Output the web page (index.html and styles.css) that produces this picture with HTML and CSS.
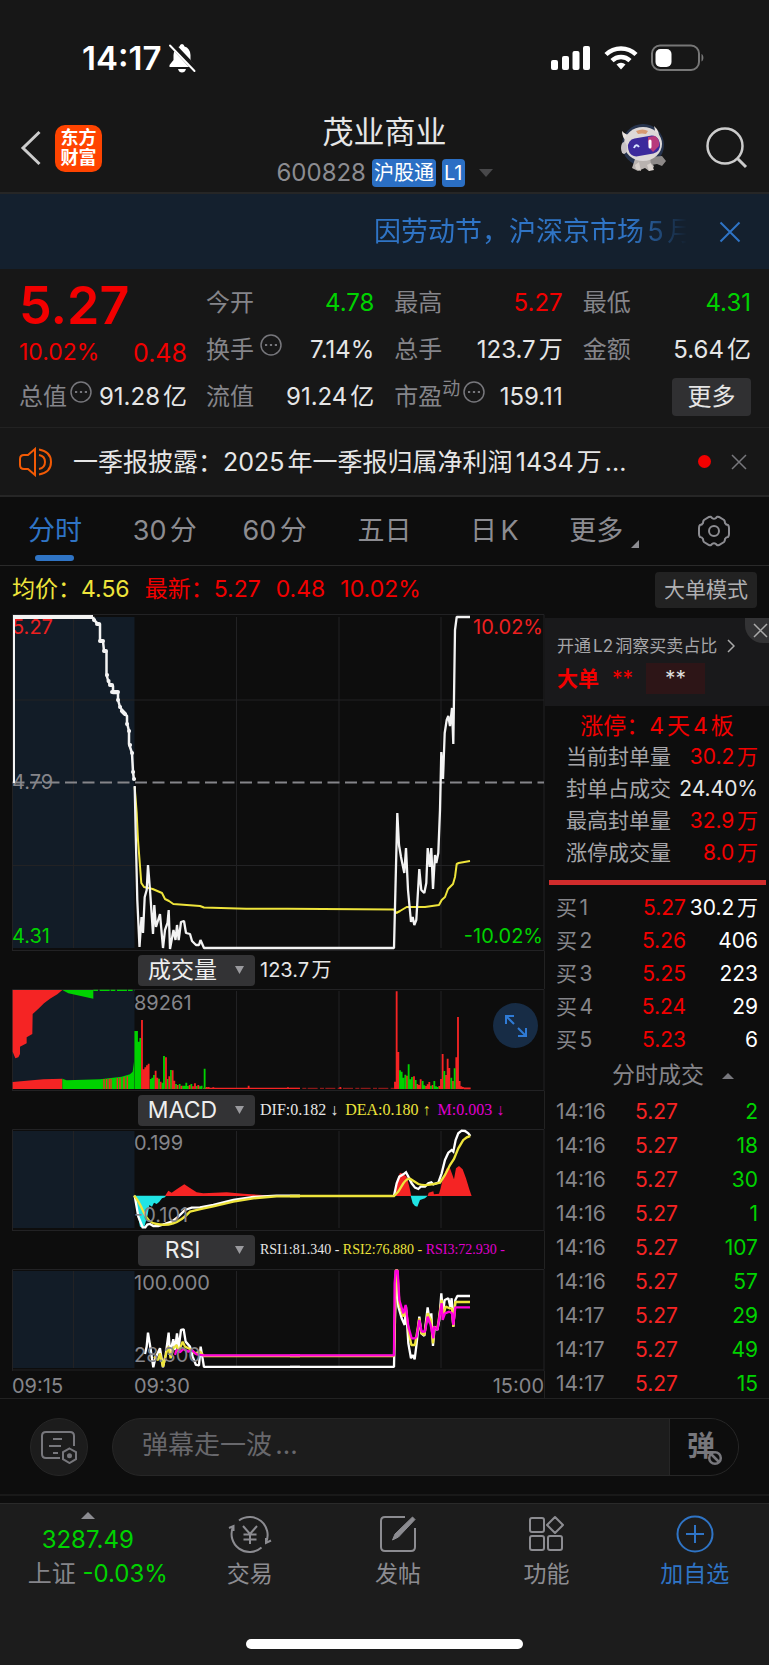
FILE: index.html
```html
<!DOCTYPE html>
<html lang="zh-CN">
<head>
<meta charset="utf-8">
<meta name="viewport" content="width=device-width, initial-scale=1">
<title>茂业商业 600828</title>
<link rel="stylesheet" href="styles.css">
</head>
<body>
<header class="top">
  <div class="status">
    <div class="status-side">
      <span class="clock">14:17</span>
      <svg width="28" height="30" viewBox="0 0 28 30"><path d="M14 1Q12 1 11.500 3.500 6 5 5.500 12v5L1.500 22v2h25v-2l-4-5v-5Q22 5 16.500 3.500 16 1 14 1zM10 26h8q-1 3.500-4 3.500T10 26z" fill="#fff"/><path d="M3.500 1 28 27" stroke="#171717" stroke-width="6"/><path d="M2 2.500 26.500 28" stroke="#fff" stroke-width="2" stroke-linecap="round"/></svg>
    </div>
    <div class="status-side">
      <svg width="40" height="26" viewBox="0 0 40 26" fill="#fff"><rect x="0" y="15" width="7" height="10" rx="2"/><rect x="11" y="11" width="7" height="14" rx="2"/><rect x="21.500" y="6" width="7" height="19" rx="2"/><rect x="32" y="1" width="7" height="24" rx="2"/></svg>
      <svg width="34" height="26" viewBox="0 0 34 26" fill="none" stroke="#fff" stroke-width="4.500"><path d="M2 9.500a21.500 21.500 0 0 1 30 0"/><path d="M8 15.700a13 13 0 0 1 18 0"/><path d="m17 24.500-4.500-5a6.500 6.500 0 0 1 9 0z" fill="#fff" stroke="none"/></svg>
      <svg width="54" height="28" viewBox="0 0 54 28"><rect x="1" y="1.500" width="47" height="24.500" rx="8" fill="none" stroke="#777" stroke-width="2"/><rect x="4.500" y="5" width="16" height="18" rx="5" fill="#fff"/><path d="M50.500 10c2.500 1 2.500 6.500 0 7.500z" fill="#777"/></svg>
    </div>
  </div>
  <div class="bar">
    <div class="bar-side">
      <button class="plain" aria-label="返回"><svg width="22" height="36" viewBox="0 0 22 36"><path d="M19.500 2 3 18l16.500 16" fill="none" stroke="#ccc" stroke-width="3"/></svg></button>
      <div class="logo">东方<br>财富</div>
    </div>
    <div class="stock">
      <h1>茂业商业</h1>
      <div class="code"><span>600828</span><span class="tag">沪股通</span><span class="tag">L1</span><svg class="code-arrow" width="14" height="12" viewBox="0 0 14 12"><path d="M0 2h14L7 10z" fill="#48484a"/></svg></div>
    </div>
    <div class="bar-side bar-end">
      <svg width="50" height="50" viewBox="0 0 50 50">
        <circle cx="24" cy="22" r="21" fill="#26334d"/>
        <path d="M16 36q8-5 16 0l3 8-5 4-4-3-7 3-6-3z" fill="#b9b3b0"/>
        <path d="M31 34l12-1 4 5-4 5-5-2-6 1z" fill="#8d8988"/><path d="M16 42l4-3 2 9-5-2zM28 42l4-2 3 7-5 1z" fill="#d8d1cc"/>
        <path d="M3 8q0 7 5 11l6-6Q6 12 3 8zM35 3q2 6-1 10l6 3q1-8-5-13z" fill="#e9e3df"/>
        <ellipse cx="24" cy="21" rx="19" ry="17" fill="#ddd8d7"/><path d="M17 8q7-3 12 0l-2 3q-4-1-8 0z" fill="#d89a72"/>
        <rect x="9" y="14" width="32" height="18" rx="8" fill="#3c2a9c" transform="rotate(-10 25 23)"/><path d="M29 14l7-1q5 3 4 10l-6 6q-6-5-5-15z" fill="#b83a7c"/>
        <path d="M15 25q2-5 5-1" fill="none" stroke="#d9e6ff" stroke-width="2"/><path d="M31 18v6" stroke="#fff" stroke-width="3" stroke-linecap="round"/>
        <ellipse cx="5" cy="25" rx="3" ry="6" fill="#c7c2c5"/>
      </svg>
      <button class="plain" aria-label="搜索"><svg width="44" height="44" viewBox="0 0 44 44" fill="none" stroke="#ccc" stroke-width="2.500"><circle cx="20" cy="20" r="17.500"/><path d="m32.500 32.500 8.500 8.500" stroke-width="3"/></svg></button>
    </div>
  </div>
</header>

<section class="banner">
  <p>因劳动节，沪深京市场5月</p>
  <button class="plain" aria-label="关闭公告"><svg width="22" height="22" viewBox="0 0 22 22"><path d="m1.500 1.500 19 19m0-19-19 19" stroke="#2f74c5" stroke-width="2"/></svg></button>
</section>

<section class="quote">
  <div class="q-main">
    <strong>5.27</strong>
    <div class="q-change"><span>10.02%</span><b>0.48</b></div>
    <div class="q-item"><span>总值</span><svg class="dots" width="22" height="22" viewBox="0 0 22 22"><circle cx="11" cy="11" r="10" fill="none" stroke="#77777c" stroke-width="1.500"/><path d="M5 11h2.200m2.700 0h2.200m2.700 0h2.200" stroke="#77777c" stroke-width="2.200"/></svg><b>91.28亿</b></div>
  </div>
  <div class="q-grid">
    <div class="q-item"><span>今开</span><b class="green">4.78</b></div>
    <div class="q-item"><span>最高</span><b class="red">5.27</b></div>
    <div class="q-item"><span>最低</span><b class="green">4.31</b></div>
    <div class="q-item"><span>换手</span><svg class="dots dots-gap" width="22" height="22" viewBox="0 0 22 22"><circle cx="11" cy="11" r="10" fill="none" stroke="#77777c" stroke-width="1.500"/><path d="M5 11h2.200m2.700 0h2.200m2.700 0h2.200" stroke="#77777c" stroke-width="2.200"/></svg><b>7.14%</b></div>
    <div class="q-item"><span>总手</span><b>123.7万</b></div>
    <div class="q-item"><span>金额</span><b>5.64亿</b></div>
    <div class="q-item"><span>流值</span><b>91.24亿</b></div>
    <div class="q-item"><span>市盈</span><small>动</small><svg class="dots" width="22" height="22" viewBox="0 0 22 22"><circle cx="11" cy="11" r="10" fill="none" stroke="#77777c" stroke-width="1.500"/><path d="M5 11h2.200m2.700 0h2.200m2.700 0h2.200" stroke="#77777c" stroke-width="2.200"/></svg><b>159.11</b></div>
    <div class="q-item q-end"><button class="more">更多</button></div>
  </div>
</section>

<section class="news">
  <svg width="34" height="30" viewBox="0 0 34 30" fill="none" stroke="#f25a05" stroke-width="2"><path d="M16 2v26l-7-6H5q-4 0-4-4v-6q0-4 4-4h4zM20 8q6 1 6 7t-6 7M20 2.500q12 2 12 12.500t-12 12.500"/></svg>
  <p>一季报披露：2025年一季报归属净利润1434万...</p>
  <i class="dot"></i>
  <button class="plain" aria-label="关闭消息"><svg width="16" height="16" viewBox="0 0 16 16"><path d="m1 1 14 14m0-14L1 15" stroke="#77777c" stroke-width="1.500"/></svg></button>
</section>

<nav class="tabs">
  <button class="active">分时</button><button>30分</button><button>60分</button><button>五日</button><button>日K</button>
  <button>更多<svg class="corner" width="8" height="13" viewBox="0 0 8 13"><path d="M8 5v8H0z" fill="#8c8c91"/></svg></button>
  <button aria-label="设置"><svg width="34" height="32" viewBox="0 0 34 32" fill="none" stroke="#8c8c91" stroke-width="2"><path d="M12 2q2-1 3 1 2 1.500 4 0 1-2 3-1l5 3q1 1 1 3 1 2 3 2 1 1 1 3v6q0 2-1 3-2 0-3 2 0 2-1 3l-5 3q-2 1-3-1-2-1.500-4 0-1 2-3 1l-5-3q-1-1-1-3-1-2-3-2-1-1-1-3v-6q0-2 1-3 2 0 3-2 0-2 1-3z"/><circle cx="17" cy="16" r="5"/></svg></button>
</nav>

<main class="market">
  <div class="legend">
    <span class="yellow">均价：4.56</span><span class="red">最新：5.27</span><span class="red">0.48</span><span class="red">10.02%</span>
    <button>大单模式</button>
  </div>
  <div class="charts">
    <svg class="plot" viewBox="12 614 533 337">
      <rect x="12.500" y="617" width="122" height="331" fill="#121c27"/>
      <path d="M12.500 951V614.500H544V951M12.500 700H544M12.500 865.500H544M12.500 950.500H544M73.500 617V948M236.500 617V948M339 617V948M441 617V948" fill="none" stroke="#222224"/>
      <path d="M12.500 782.500H544" stroke="#85858a" stroke-width="2" stroke-dasharray="12 5.500"/>
      <g font-size="20"><text x="12" y="634" fill="#ed2020">5.27</text><text x="12" y="789" fill="#85858a">4.79</text><text x="12" y="943" fill="#00d200">4.31</text><text x="543" y="634" fill="#ed2020" text-anchor="end">10.02%</text><text x="543" y="943" fill="#00d200" text-anchor="end">-10.02%</text></g>
      <g fill="none" stroke-linejoin="bevel">
        <path stroke="#eee43b" stroke-width="2" d="M134.700 787 136.700 813 138 840 141.300 883 144 887 152.700 889 162 893 165 899 169 901 173.300 904 200 906 204 907.500 246 908.700 287 908.700 394 909.500 396.300 913 400 911 406.700 907 425 907 439 905 441.700 900 445 897 448 889 453 884 455 877 456.700 864 458.700 863 470 861"/>
        <path stroke="#f3f3f3" stroke-width="4" d="M13 617H93"/>
        <path stroke="#f3f3f3" stroke-width="2" d="M14 783V617"/>
        <path stroke="#f3f3f3" stroke-width="2.500" stroke-linejoin="round" d="M93 617 94 620 98 624H100V641H103L104 651 106.500 652V675L108 680 110 685 113 686V693H118V700L120 707 124 713 127 716V723L129 731V744L132 753 133 772 134 780"/>
        <path stroke="#f3f3f3" stroke-width="4" stroke-linecap="round" d="M94 620h.1M97 624h2M100 641h3M104 651h2M107 675h.1M108.500 681h.1M110 685h2M112 692h6M118 700h.1M120 707h.1M122 711l3 3M127 724h.1M129 731h.1M130 745h.1M132 753h.1M133 772h.1M134 779h.1"/>
        <path stroke="#f3f3f3" stroke-width="2.300" d="M134.700 786 135.700 833 137.300 900 139.500 947 141.500 917 143 933 144.700 897 146.700 890 148 865 150 890 153 934 154.300 905 156 927 160 914 163 948 165 930 167.500 923 168.700 910 170 949 173.500 930 175.500 940 177 925 178.700 940 181 922 184 921 186 933 190 934 192 941 196 945 199 945 200.500 940 204 948 394 948 397.300 813 399 845 401 857 404.300 873 406 848 408 890 411 922 412.700 917 414.300 925 416.300 920 419.300 869 421.300 890 424.300 893 426.300 883 427.700 848 429.700 867 431.300 848 433 889 435 855 436.300 863 438.300 853 440 810 441.300 752 443 779 444.700 733 446.700 720 448.300 716 450 726 452 708 453.300 744 455 630 456.700 617 470 617"/>
      </g>
    </svg>

    <div class="pick"><label><select aria-label="指标一"><option>成交量</option></select><svg width="9" height="8" viewBox="0 0 9 8"><path d="M0 0h9L4.500 8z" fill="#9a9a9e"/></svg></label><span class="amount">123.7万</span></div>
    <div class="expandable">
    <svg class="plot" viewBox="12 989 533 102">
      <rect x="12.500" y="990" width="122" height="99" fill="#121c27"/>
      <path d="M12.500 1091V989.500H544V1091M12.500 1090.500H544M73.500 991V1089M236.500 991V1089M339 991V1089M441 991V1089" fill="none" stroke="#222224"/>
      <g transform="translate(0 950) scale(.3333)">
        <path fill="#f52424" d="M38 120H187L172 133 150 146 132 160 120 172 108 183 98 192 97 252 80 262V280L60 290V312L55 322 46 325 38 305zM38 417V396L130 388 187 386V417z"/>
        <path fill="#00d200" d="M187 120H280V146L205 130zM187 417V386L200 391 300 388 365 380 390 373 398 365 402 335V417z"/>
        <path stroke="#00d200" stroke-width="4" d="M280 121H404" stroke-dasharray="14 5 30 3"/>
        <path stroke="#f52424" stroke-width="4" d="M312 387V417M320 387V417M328 386V417M333 386V417M352 384V417M360 383V417M372 381V417M382 379V417M610 415H900" />
        <path stroke="#00d200" stroke-width="5.500" d="M406 243V417M411 243V417M416 275V417M421 264V417M452 387V417M457 383V417M462 375V417M477 386V417M487 398V417M492 318V417M503 387V417M513 360V417M528 402V417M539 402V417M549 407V417M554 407V417M559 398V417M564 408V417M574 402V417M590 408V417M600 409V417M605 407V417M614 356V417"/>
        <path stroke="#f52424" stroke-width="5.500" d="M426 210V417M431 358V417M436 352V417M441 346V417M446 341V417M467 362V417M472 383V417M482 395V417M498 322V417M508 379V417M518 361V417M523 392V417M533 405V417M544 407V417M569 405V417M579 409V417M585 400V417M595 405V417M620 411V417M626 411V417M640 412V417M746 407V417M864 412V417"/>
      </g>
      <g transform="translate(290 950) scale(.3333)">
        <path stroke="#f52424" stroke-width="5.500" d="M315 395V417M320 124V417M325 306V417M351 377V417M372 379V417M382 402V417M387 405V417M392 388V417M408 408V417M413 403V417M418 396V417M428 405V417M448 408V417M453 387V417M458 312V417M468 375V417M473 326V417M478 354V417M489 393V417M499 322V417M504 201V417M509 393V417M514 409V417M519 411V417M151 411V417M522 415H542"/>
        <path stroke="#f52424" stroke-width="2" d="M0 415H312" stroke-dasharray="30 7 12 4"/>
        <path stroke="#00d200" stroke-width="5.500" d="M330 361V417M335 365V417M340 383V417M346 374V417M356 343V417M361 388V417M366 381V417M377 390V417M398 393V417M403 406V417M423 407V417M433 393V417M438 409V417M443 411V417M463 363V417M484 383V417M494 355V417"/>
      </g>
      <text x="134" y="1010" font-size="20" fill="#85858a">89261</text>
    </svg>
    <button class="expand" aria-label="展开"><svg width="24" height="24" viewBox="0 0 24 24" fill="none" stroke="#2f7bd6" stroke-width="2"><path d="M2 10V2h8M2 2l8 8M22 14v8h-8M22 22l-8-8"/></svg></button>
    </div>

    <div class="pick"><label><select aria-label="指标二"><option>MACD</option></select><svg width="9" height="8" viewBox="0 0 9 8"><path d="M0 0h9L4.500 8z" fill="#9a9a9e"/></svg></label><span class="serif">DIF:0.182 ↓</span><span class="serif yellow">DEA:0.180 ↑</span><span class="serif magenta">M:0.003 ↓</span></div>
    <svg class="plot" viewBox="12 1129 533 102">
      <rect x="12.500" y="1131" width="122" height="97" fill="#121c27"/>
      <path d="M12.500 1231V1129.500H544V1231M12.500 1230.500H544M73.500 1131V1228M236.500 1131V1228M339 1131V1228M441 1131V1228" fill="none" stroke="#222224"/>
      <g transform="translate(0 950) scale(.3333)" fill="none">
        <path fill="#20e4e4" d="M404 737 412 790 420 830 432 835 436 820 443 795 448 765 456 770 462 758 470 762 478 755 486 745 495 742 498 737z"/>
        <path fill="#f52424" d="M495 738 505 722 515 728 530 718 553 703 570 714 590 727 610 730 680 727 730 731 800 736V738z"/>
        <path stroke="#fff" stroke-width="7" d="M404 737 415 800 428 832H436L442 824 450 822 460 828H475L495 822 515 815 535 800 555 780 575 773 600 772 640 765 700 750 760 741 830 737H900"/>
        <path stroke="#eee43b" stroke-width="7" d="M402 737Q415 750 430 785T470 822Q495 828 520 820T570 785Q600 777 640 769L700 755 760 745 830 739H900"/>
      </g>
      <g transform="translate(290 950) scale(.3333)" fill="none">
        <path fill="#f52424" d="M315 738 322 690 330 668 340 672 350 680 358 710 364 738zM413 738 416 728 430 724 432 733 447 731 452 715 460 680 470 655H480L492 688 498 655 507 648 518 658 528 685 538 718 545 738z"/>
        <path fill="#20e4e4" d="M362 737 368 760 375 768 382 770 390 750 405 745 413 737z"/>
        <path stroke="#fff" stroke-width="7" d="M312 737 320 700 328 680 340 673 348 667 355 680 365 700 375 713 385 717 392 710H405L415 700 424 697 430 703 445 698 455 670 465 630 475 608 485 600 490 605 497 570 505 550 515 542 525 543 535 550 541 558"/>
        <path stroke="#eee43b" stroke-width="7" d="M0 738H312L325 725 340 700Q350 686 360 686L385 702Q405 710 450 698L465 675 480 645 492 627 505 595 520 570Q530 560 541 558"/>
      </g>
      <g font-size="20" fill="#85858a"><text x="134" y="1150">0.199</text><text x="134" y="1222">-0.101</text></g>
    </svg>

    <div class="pick"><label><select aria-label="指标三"><option>RSI</option></select><svg width="9" height="8" viewBox="0 0 9 8"><path d="M0 0h9L4.500 8z" fill="#9a9a9e"/></svg></label><span class="serif rsi">RSI1:81.340 - <span class="yellow">RSI2:76.880 - </span><span class="magenta">RSI3:72.930 -</span></span></div>
    <svg class="plot" viewBox="12 1269 533 102">
      <rect x="12.500" y="1271" width="122" height="97" fill="#121c27"/>
      <path d="M12.500 1371V1269.500H544V1371M12.500 1370H544M73.500 1271V1368M236.500 1271V1368M339 1271V1368M441 1271V1368" fill="none" stroke="#222224"/>
      <g transform="translate(0 950) scale(.3333)" fill="none" stroke-width="7" stroke-linejoin="bevel">
        <path stroke="#fff" d="M435 1212 440 1190 444 1148 450 1185 460 1252 466 1225 480 1195 489 1252 497 1215 506 1148 510 1210 520 1168 525 1200 531 1150 536 1195 543 1140 551 1138 557 1175 570 1190 578 1220 588 1245 597 1246 602 1190 612 1251H900"/>
        <path stroke="#eee43b" d="M462 1220 475 1230 480 1210 489 1250 500 1205 506 1190 512 1225 520 1195 530 1185 536 1205 548 1175 555 1190 570 1197 585 1210 600 1205 612 1218H900"/>
        <path stroke="#f0d" d="M525 1215 530 1200 540 1207 550 1197 565 1205 575 1200 590 1213 612 1216H900"/>
      </g>
      <g transform="translate(290 950) scale(.3333)" fill="none" stroke-width="7" stroke-linejoin="bevel">
        <path stroke="#fff" d="M0 1251H312L318 960 325 1070 335 1105 344 1125 348 1070 355 1180 363 1225 368 1215 374 1228 380 1180 388 1100 394 1150 403 1158 413 1072 420 1120 424 1090 429 1188 434 1130 442 1140 448 1110 454 1030 459 1090 464 1050 475 1045 481 1070 485 1045 490 1130 496 1050 502 1038H540"/>
        <path stroke="#eee43b" d="M0 1218H312L318 960H322L328 1060 340 1100 348 1080 357 1150 364 1185H375L388 1105 394 1150 403 1155 413 1090 423 1110 429 1180 433 1130 442 1138 455 1050 459 1100 467 1070 480 1075H486L490 1130 496 1056H540"/>
        <path stroke="#f0d" d="M0 1216H312L314 1000 317 962H323L328 1050 340 1090 347 1065 355 1130 365 1165H375L380 1160 388 1110 395 1145H405L413 1100 422 1125 430 1165 432 1130 442 1140 455 1060 458 1110 465 1090 478 1085 486 1090 490 1125 496 1072H540"/>
      </g>
      <g font-size="20" fill="#85858a"><text x="134" y="1290">100.000</text><text x="134" y="1362">28.300</text></g>
    </svg>
    <div class="times"><span>09:15</span><span>09:30</span><span>15:00</span></div>
  </div>

  <aside class="side">
    <div class="promo">
      <a href="#l2">开通L2洞察买卖占比 <svg width="8" height="14" viewBox="0 0 8 14"><path d="m1 1 6 6-6 6" fill="none" stroke="#aaa" stroke-width="1.500"/></svg></a>
      <div class="big"><b>大单</b><span class="red">**</span><span class="mask">**</span></div>
      <button class="promo-close" aria-label="关闭"><svg width="15" height="15" viewBox="0 0 15 15"><path d="m1 1 13 13m0-13L1 14" stroke="#aaa" stroke-width="1.500"/></svg></button>
    </div>
    <h2>涨停：4天4板</h2>
    <table class="limit">
      <tr><th>当前封单量</th><td class="red">30.2万</td></tr>
      <tr><th>封单占成交</th><td>24.40%</td></tr>
      <tr><th>最高封单量</th><td class="red">32.9万</td></tr>
      <tr><th>涨停成交量</th><td class="red">8.0万</td></tr>
    </table>
    <hr>
    <table class="book">
      <tr><th>买1</th><td class="red">5.27</td><td>30.2万</td></tr>
      <tr><th>买2</th><td class="red">5.26</td><td>406</td></tr>
      <tr><th>买3</th><td class="red">5.25</td><td>223</td></tr>
      <tr><th>买4</th><td class="red">5.24</td><td>29</td></tr>
      <tr><th>买5</th><td class="red">5.23</td><td>6</td></tr>
    </table>
    <button class="deals-head">分时成交<svg width="12" height="6" viewBox="0 0 12 6"><path d="M0 6h12L6 0z" fill="#77777c"/></svg></button>
    <table class="deals">
      <tr><th>14:16</th><td>5.27</td><td>2</td></tr>
      <tr><th>14:16</th><td>5.27</td><td>18</td></tr>
      <tr><th>14:16</th><td>5.27</td><td>30</td></tr>
      <tr><th>14:16</th><td>5.27</td><td>1</td></tr>
      <tr><th>14:16</th><td>5.27</td><td>107</td></tr>
      <tr><th>14:16</th><td>5.27</td><td>57</td></tr>
      <tr><th>14:17</th><td>5.27</td><td>29</td></tr>
      <tr><th>14:17</th><td>5.27</td><td>49</td></tr>
      <tr><th>14:17</th><td>5.27</td><td>15</td></tr>
    </table>
  </aside>
</main>

<section class="comment">
  <button class="round" aria-label="弹幕设置"><svg width="38" height="34" viewBox="0 0 38 34" fill="none" stroke="#77777c" stroke-width="2"><path d="M34 16V6q0-4-4-4H6Q2 2 2 6v18q0 4 4 4h14M13 9h9M9 16h12M13 23h5"/><path d="m29.500 18.500 6.500 3.700v7l-6.500 3.800-6.500-3.800v-7z"/><circle cx="29.500" cy="25.700" r="1.500" fill="#77777c"/></svg></button>
  <div class="field">
    <input type="text" aria-label="弹幕" placeholder="弹幕走一波...">
    <button aria-label="关闭弹幕"><span>弹</span><svg width="16" height="16" viewBox="0 0 16 16"><circle cx="8" cy="8" r="5.800" fill="#0d0d0d" stroke="#77777c" stroke-width="2.500"/><path d="m4 4 8 8" stroke="#77777c" stroke-width="2.500"/></svg></button>
  </div>
</section>

<footer class="bottom">
  <nav>
    <a class="index" href="#index"><svg width="14" height="7" viewBox="0 0 14 7"><path d="M0 7h14L7 0z" fill="#8c8c91"/></svg><b>3287.49</b><span>上证 <em>-0.03%</em></span></a>
    <a href="#trade"><svg width="44" height="40" viewBox="0 0 44 40" fill="none" stroke="#8c8c91" stroke-width="2"><path d="M11 6.500a18 18 0 0 1 27 22M33.500 33.500A18 18 0 0 1 5 13M1 14l4.500-2v5M43 26.500l-5 2.500v-5"/><path d="m15 12 7 8 7-8M22 20v10M15.500 20.500h13M15.500 25.500h13"/></svg>交易</a>
    <a href="#post"><svg width="44" height="40" viewBox="0 0 44 40" fill="none" stroke="#8c8c91" stroke-width="2"><path d="M29 3H9q-4 0-4 4v26q0 4 4 4h26q4 0 4-4V14"/><path d="M36.500 3 39 5.500 22.500 23l-6 3 2.500-6z" fill="#8c8c91" stroke-width="1"/></svg>发帖</a>
    <a href="#tools"><svg width="44" height="40" viewBox="0 0 44 40" fill="none" stroke="#8c8c91" stroke-width="2"><rect x="6" y="4" width="14" height="14" rx="2"/><rect x="6" y="22" width="14" height="14" rx="2"/><rect x="24" y="22" width="14" height="14" rx="2"/><path d="m31 3 8 8-8 8-8-8z" stroke-linejoin="round"/></svg>功能</a>
    <a class="add" href="#add"><svg width="44" height="40" viewBox="0 0 44 40" fill="none" stroke="#2f74c5" stroke-width="2"><circle cx="22" cy="20" r="17.500"/><path d="M22 11v18M13 20h18"/></svg>加自选</a>
  </nav>
  <div class="home"></div>
</footer>
</body>
</html>
```
FILE: styles.css
```css
* { box-sizing: border-box; margin: 0; padding: 0; }
body { background: #0d0d0d; color: #e6e6e6; font-family: Inter, "Noto Sans CJK SC", sans-serif; font-size: 24px; line-height: 1.3; text-autospace: normal; }
button, input, select { font: inherit; color: inherit; background: none; border: 0; }
svg { display: block; flex: none; }
a { color: inherit; text-decoration: none; }
b, em { font-weight: 400; font-style: normal; }
.plain { flex: none; }
.red { color: #f20000; }
.green { color: #00d200; }
.yellow { color: #eee43b; }
.magenta { color: #e000d0; }

.top { background: #171717; border-bottom: 2px solid #262626; }
.status { display: flex; justify-content: space-between; align-items: center; height: 116px; padding: 0 64px 0 82px; }
.status-side { display: flex; align-items: center; gap: 13px; }
.clock { font-size: 33px; font-weight: 600; line-height: 40px; margin-right: -6px; color: #fff; }
.bar { display: grid; grid-template-columns: 1fr auto 1fr; height: 76px; padding: 0 20px; }
.bar-side { display: flex; align-items: center; gap: 13px; height: 64px; }
.bar-end { justify-content: flex-end; gap: 36px; }
.logo { width: 47px; height: 47px; border-radius: 10px; background: #ff4400; color: #fff; font-size: 18px; font-weight: 700; line-height: 20px; text-align: center; padding-top: 3px; }
.stock { text-align: center; }
.stock h1 { font-size: 31px; font-weight: 400; line-height: 32px; }
.code { display: flex; align-items: center; justify-content: center; gap: 6px; height: 50px; color: #8c8c91; font-size: 24px; }
.tag { background: #2b6fc4; color: #fff; font-size: 20px; line-height: 28px; border-radius: 4px; padding: 0 2px; }
.code-arrow { margin-left: 8px; }

.banner { display: flex; align-items: center; justify-content: flex-end; height: 75px; padding-right: 28px; gap: 32px; background: #14202e; color: #2f74c5; }
.banner p { width: 313px; font-size: 27px; line-height: 40px; white-space: nowrap; overflow: hidden; -webkit-mask-image: linear-gradient(90deg, #000 82%, transparent); mask-image: linear-gradient(90deg, #000 82%, transparent); }

.quote { display: grid; grid-template-columns: 168fr 545fr; gap: 19px; padding: 10px 18px 7px 19px; background: #171717; border-bottom: 1px solid #222; }
.q-main strong { display: block; color: #f20000; font-size: 52px; font-weight: 600; line-height: 54px; }
.q-change { display: flex; justify-content: space-between; align-items: center; height: 40px; color: #f20000; font-size: 23px; }
.q-change b { font-size: 25px; }
.q-grid { display: grid; grid-template-columns: repeat(3, 1fr); column-gap: 20px; }
.q-item { display: flex; align-items: center; height: 47px; white-space: nowrap; }
.q-item > span { color: #85858a; }
.q-item > b { margin-left: auto; }
.q-item > small { align-self: flex-start; color: #85858a; font-size: 18px; line-height: 32px; }
.dots { margin-bottom: 10px; }
.q-item > .dots { margin-left: 3px; }
.q-item > .dots-gap { margin-left: 6px; }
.q-end { justify-content: flex-end; }
.more { width: 79px; height: 38px; border-radius: 4px; background: #303032; }

.news { display: flex; align-items: center; height: 69px; padding: 0 22px 0 19px; background: #171717; border-bottom: 2px solid #262626; }
.news p { flex: 1; margin-left: 20px; font-size: 25px; line-height: 36px; white-space: nowrap; }
.dot { width: 13px; height: 13px; margin-right: 20px; border-radius: 50%; background: #f20000; }

.tabs { display: grid; grid-template-columns: repeat(7, 1fr); height: 69px; border-bottom: 1px solid #2a2a2a; }
.tabs button { display: flex; align-items: center; justify-content: center; color: #8c8c91; font-size: 27px; }
.tabs .active { position: relative; color: #2f74c5; }
.tabs .active::after { content: ""; position: absolute; bottom: 4px; width: 39px; height: 6px; border-radius: 3px; background: #2f74c5; }
.corner { margin: 20px 0 0 8px; }

.market { display: grid; grid-template-columns: 545fr 224fr; border-bottom: 1px solid #222; }
.legend { grid-column: 1 / -1; display: flex; align-items: center; height: 48px; padding: 0 12px; gap: 15px; font-size: 23px; }
.legend button { width: 102px; height: 36px; margin-left: auto; border-radius: 4px; background: #222; color: #b0b0b3; font-size: 21px; }
.charts { padding-left: 12px; }
.plot { width: 100%; height: auto; }
.pick { display: flex; align-items: center; gap: 8px; height: 38px; padding-left: 126px; border-right: 1px solid #222; white-space: nowrap; }
.pick label { position: relative; display: flex; align-items: center; }
.pick select { appearance: none; width: 117px; height: 31px; padding: 0 36px 0 8px; border-radius: 4px; background: #333335; color: #eee; font-size: 23px; line-height: 30px; text-align-last: center; }
.pick label svg { position: absolute; right: 11px; }
.amount { margin-left: -3px; font-size: 20px; }
.serif { margin-left: -3px; margin-right: 2px; font-family: "Liberation Serif", serif; font-size: 16px; }
.rsi { font-size: 14px; }
.expandable { position: relative; }
.expand { position: absolute; right: 7px; top: 14px; display: grid; place-items: center; width: 45px; height: 45px; border-radius: 50%; background: #172c45; }
.times { display: flex; height: 27px; color: #85858a; font-size: 20px; line-height: 30px; border-right: 1px solid #222; }
.times span { width: 122px; }
.times span:last-child { width: auto; margin-left: auto; }

.side { padding-top: 4px; font-size: 21px; }
.promo { position: relative; height: 88px; padding: 16px 12px 0; background: #19191b; color: #a5a5a8; }
.promo a { display: flex; align-items: center; gap: 10px; font-size: 17px; line-height: 24px; white-space: nowrap; }
.big { display: flex; align-items: center; height: 41px; gap: 13px; }
.big b { color: #f20000; font-weight: 600; }
.mask { width: 59px; height: 31px; background: #2d1517; color: #ddd; text-align: center; line-height: 31px; }
.promo-close { position: absolute; right: 0; top: 0; display: grid; place-items: center; width: 24px; height: 25px; padding-left: 6px; border-bottom-left-radius: 18px; background: #333335; overflow: hidden; }
.side h2 { height: 35px; color: #f20000; font-size: 23px; font-weight: 400; line-height: 40px; text-align: center; }
.side table { width: 100%; border-collapse: collapse; white-space: nowrap; }
.side th { font-weight: 400; text-align: left; }
.side td { text-align: right; padding-right: 11px; }
.limit tr { height: 32px; }
.limit th { padding-left: 21px; color: #a5a5a8; }
.side hr { height: 5px; margin: 11px 3px 6px 4px; border: 0; background: #d12c2c; }
.book { color: #fff; }
.book tr { height: 33px; }
.book th { width: 60px; padding-left: 11px; color: #85858a; }
.book td:nth-child(2) { padding-right: 0; }
.book td:last-child { width: 83px; padding-left: 0; }
.deals-head { display: flex; align-items: center; justify-content: center; gap: 18px; width: 100%; height: 39px; padding-left: 32px; color: #85858a; font-size: 23px; }
.side .deals { margin-bottom: -5px; }
.deals tr { height: 34px; }
.deals th { padding-left: 11px; color: #85858a; }
.deals td { color: #f52424; }
.deals td:last-child { width: 80px; color: #00d200; }

.comment { display: flex; align-items: center; gap: 24px; height: 97px; padding: 0 30px; border-bottom: 2px solid #191919; }
.round { display: grid; place-items: center; flex: none; width: 58px; height: 58px; border: 1px solid #262626; border-radius: 50%; background: #1c1c1c; }
.field { flex: 1; display: flex; height: 58px; border: 1px solid #262626; border-radius: 29px; overflow: hidden; background: #1c1c1c; }
.field input { flex: 1; min-width: 0; padding: 0 29px 4px; font-size: 26px; outline: 0; }
.field input::placeholder { color: #68686c; opacity: 1; }
.field button { display: flex; align-items: center; width: 69px; padding-left: 17px; background: #0d0d0d; border-left: 1px solid #262626; color: #77777c; font-size: 28px; font-weight: 700; }
.field button svg { margin: 22px 0 0 -8px; }

.bottom { margin-top: 7px; border-top: 1px solid #2a2a2a; background: #1c1c1c; color: #8c8c91; }
.bottom nav { display: grid; grid-template-columns: 175fr repeat(4, 148fr); height: 135px; }
.bottom a { display: flex; flex-direction: column; align-items: center; padding-top: 10px; font-size: 23px; line-height: 40px; white-space: nowrap; }
.bottom a.index { font-size: 24px; line-height: 34px; padding-top: 8px; }
.index b { margin-top: 4px; }
.index span { padding-left: 20px; }
.index b, .index em { color: #00d200; }
.index { color: #85858a; }
.bottom .add { color: #2f74c5; }
.home { width: 36%; height: 10px; margin: 0 auto; border-radius: 5px; background: #fff; }
.bottom { padding-bottom: 16px; }
```
